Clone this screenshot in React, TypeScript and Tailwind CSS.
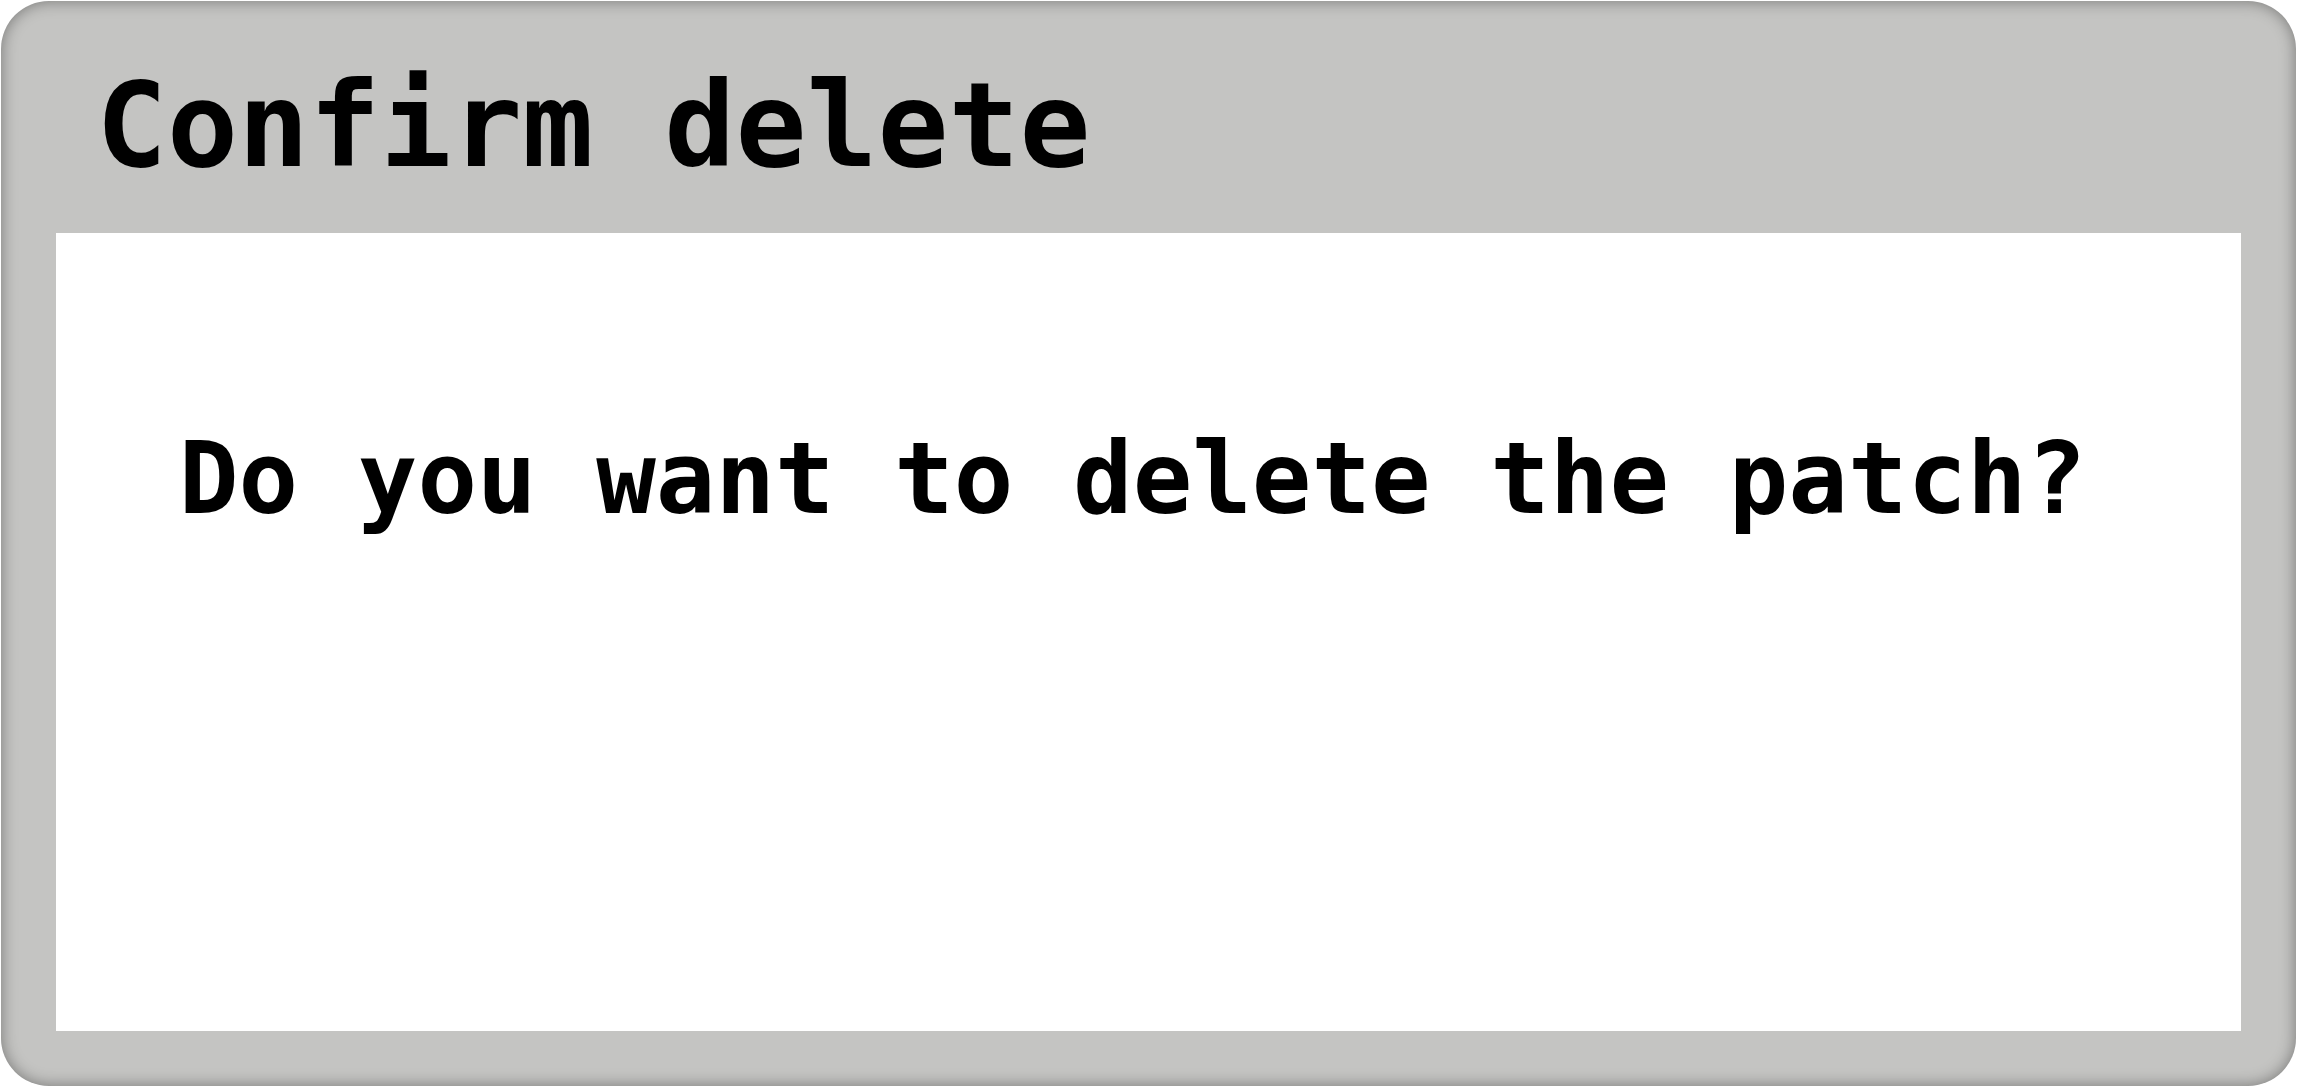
export default function App() {
  return (
    <div className="w-[2297px] h-[1087px] bg-white p-px">
      <div className="flex h-full w-full flex-col rounded-[48px] bg-[#c4c4c2] px-[55px] pb-[55px] shadow-[inset_0_0_16px_rgba(0,0,0,0.4)]">
        <div className="flex h-[232px] items-start pt-[54px] pl-[40px]">
          <h1 className="font-['DejaVu_Sans_Mono',monospace] text-[118px] font-bold leading-[140px] text-black">
            Confirm delete
          </h1>
        </div>
        <div className="flex-1 bg-white pl-[123px] pt-[186px]">
          <p className="font-['DejaVu_Sans_Mono',monospace] text-[99px] font-bold leading-[120px] text-black">
            Do you want to delete the patch?
          </p>
        </div>
      </div>
    </div>
  );
}
